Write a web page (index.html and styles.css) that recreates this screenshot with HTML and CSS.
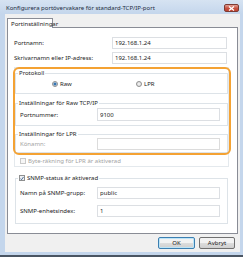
FILE: index.html
```html
<!DOCTYPE html>
<html lang="sv">
<head>
    <meta charset="UTF-8">
    <title>Konfigurera portövervakare</title>
    <link rel="stylesheet" href="styles.css">
</head>
<body>
    <div class="window">
        <div class="titlebar">
            <span class="title">Konfigurera portövervakare för standard-TCP/IP-port</span>
            <span class="close">
                <svg width="7" height="5" viewBox="0 0 7 5"><path d="M1 0.5 L6 4.5 M6 0.5 L1 4.5" stroke="#fff" stroke-width="1.3"/></svg>
            </span>
        </div>
        <div class="client">
            <div class="tabs">
                <span class="tab">Portinställningar</span>
            </div>
            <div class="panel">
                <div class="rows">
                    <label>Portnamn:</label>
                    <input type="text" class="field" readonly value="192.168.1.24">
                    <label>Skrivarnamn eller IP-adress:</label>
                    <input type="text" class="field" readonly value="192.168.1.24">
                </div>

                <div class="protocol">
                    <fieldset class="group proto">
                        <legend>Protokoll</legend>
                        <div class="options">
                            <span class="opt"><span class="radio checked"></span>Raw</span>
                            <span class="opt"><span class="radio"></span>LPR</span>
                        </div>
                    </fieldset>

                    <fieldset class="group raw">
                        <legend>Inställningar för Raw TCP/IP</legend>
                        <div class="grid">
                            <label>Portnummer:</label>
                            <input type="text" class="field" readonly value="9100">
                        </div>
                    </fieldset>

                    <fieldset class="group lpr">
                        <legend>Inställningar för LPR</legend>
                        <div class="grid">
                            <label class="disabled">Könamn:</label>
                            <input type="text" class="field" disabled value="">
                        </div>
                    </fieldset>

                    <div class="check-row disabled">
                        <span class="checkbox"></span>Byte-räkning för LPR är aktiverad
                    </div>

                    <!-- orange highlight -->
                    <div class="highlight"></div>
                </div>

                <fieldset class="group snmp">
                    <legend><span class="checkbox checked">
                        <svg width="5" height="5" viewBox="0 0 5 5"><path d="M0.6 2.6 L1.9 4 L4.4 0.6" stroke="#2b4f7e" stroke-width="1" fill="none"/></svg>
                    </span>SNMP-status är aktiverad</legend>
                    <div class="grid">
                        <label>Namn på SNMP-grupp:</label>
                        <input type="text" class="field" readonly value="public">
                        <label>SNMP-enhetsindex:</label>
                        <input type="text" class="field" readonly value="1">
                    </div>
                </fieldset>
            </div>
            <div class="footer">
                <button class="btn default">OK</button>
                <button class="btn">Avbryt</button>
            </div>
        </div>
        <div class="bottom"></div>
    </div>
</body>
</html>
```

FILE: styles.css
```css
body {
    margin: 0;
    background: #c4d6ec;
    font-family: "Noto Sans", "Open Sans", sans-serif;
    font-size: 6px;
    line-height: 8px;
    color: #1b1b1b;
}

.window {
    width: 243px;
    height: 257px;
    display: flex;
    flex-direction: column;
    background: #c4d6ec;
}

/* Title bar */
.titlebar {
    height: 14px;
    flex: none;
    display: flex;
    align-items: flex-start;
    padding: 0 6px;
    box-sizing: border-box;
    background: linear-gradient(#d6e3f2, #c4d6ec);
}

.title {
    flex: 1;
    padding-top: 4px;
    color: #1e2c3e;
}

.close {
    width: 15px;
    height: 8px;
    margin-top: 4px;
    margin-right: -2px;
    box-sizing: border-box;
    border: 1px solid #7d3b33;
    border-radius: 2px;
    background: linear-gradient(#e3a196, #c7503f 55%, #c0432f);
    display: flex;
    align-items: center;
    justify-content: center;
}

.close svg {
    display: block;
}

/* Client area */
.client {
    flex: 1;
    margin: 0 3px 0 5px;
    padding: 4px 2px 0 2px;
    background: #f0f0f0;
    display: flex;
    flex-direction: column;
    min-height: 0;
}

.tabs {
    height: 10px;
    margin-bottom: -1px;
    display: flex;
    position: relative;
    z-index: 1;
}

.tab {
    width: 46px;
    box-sizing: border-box;
    padding: 1px 0 0 3px;
    border: 1px solid #898c95;
    border-bottom: none;
    background: #fff;
}

.panel {
    height: 207px;
    box-sizing: border-box;
    border: 1px solid #898c95;
    background: #fff;
    padding-top: 9px;
}

/* Text boxes */
.field {
    height: 12px;
    box-sizing: border-box;
    margin: 0;
    padding: 0 0 0 2px;
    border: 1px solid #abadb3;
    border-top-color: #e2e3ea;
    border-color: #dcdfe3;
    background: #fff;
    font: inherit;
    color: #1b1b1b;
    outline: none;
}

.field:disabled {
    border-color: #dcdcdc;
    background: #fff;
}

label {
    display: flex;
    align-items: center;
}

.disabled {
    color: #a3a3a3;
}

.rows {
    display: grid;
    grid-template-columns: 98px 115px;
    row-gap: 3px;
    padding-left: 6px;
}

/* Group boxes */
.protocol {
    position: relative;
    width: 213px;
    margin: 3px 0 0 6px;
    padding: 1px 0 1px 0;
    border: 1px solid #e4e9ed;
}

.group {
    margin: 0;
    min-width: 0;
    border: 1px solid #dde3e8;
    padding: 0 7px 0 3px;
}

.group legend {
    padding: 0 1px;
    margin-left: -1px;
    display: flex;
    align-items: center;
    height: 8px;
}

.proto {
    padding-top: 3px;
    padding-bottom: 5px;
}

.options {
    display: flex;
    height: 8px;
    align-items: center;
}

.opt {
    display: flex;
    align-items: center;
    width: 109px;
}

.opt:first-child {
    margin-left: 33px;
}

.radio {
    width: 6px;
    height: 6px;
    box-sizing: border-box;
    border: 1px solid #8f8f8f;
    border-radius: 50%;
    background: radial-gradient(circle, #f4f4f4, #d8d8d8);
    margin-right: 2px;
}

.radio.checked {
    background: radial-gradient(circle, #2d6fb0 0, #3b7ab5 1.3px, #dfe6ee 1.8px);
}

.grid {
    display: grid;
    grid-template-columns: 78px 123px;
    row-gap: 6px;
}

.grid label {
    padding-left: 1px;
}

.raw {
    margin-top: 5px;
    padding-top: 1px;
    padding-bottom: 4px;
}

.raw .field {
    height: 13px;
}

.lpr {
    margin-top: 4px;
    padding-bottom: 2px;
}

.check-row {
    display: flex;
    align-items: center;
    height: 8px;
    margin-top: 4px;
    padding-left: 5px;
}

.checkbox {
    width: 6px;
    height: 6px;
    box-sizing: border-box;
    border: 1px solid #c9c9c9;
    background: #f6f6f6;
    margin-right: 2px;
    display: flex;
    align-items: center;
    justify-content: center;
}

.checkbox.checked {
    border-color: #8e8f8f;
    background: #eef1f5;
}

.checkbox svg {
    display: block;
}

.highlight {
    position: absolute;
    left: -2px;
    top: -1px;
    width: 218px;
    height: 88px;
    box-sizing: border-box;
    border: 2px solid #f4a233;
    border-radius: 6px;
}

.snmp {
    width: 213px;
    box-sizing: border-box;
    margin: 7px 0 0 7px;
    padding-top: 5px;
    padding-bottom: 6px;
}

/* Buttons */
.footer {
    display: flex;
    justify-content: flex-end;
    gap: 4px;
    padding: 3px 3px 0 0;
}

.btn {
    height: 12px;
    width: 36px;
    padding: 0;
    box-sizing: border-box;
    border: 1px solid #707070;
    border-radius: 2px;
    background: linear-gradient(#f2f2f2 45%, #dddddd 50%, #cfcfcf);
    font: inherit;
    color: #1b1b1b;
}

.btn.default {
    width: 37px;
    border-color: #3c7fb1;
    box-shadow: inset 0 0 0 1px #bde4f7;
}

.bottom {
    height: 5px;
    flex: none;
    border-bottom: 2px solid #4a5563;
    box-sizing: border-box;
}
```
